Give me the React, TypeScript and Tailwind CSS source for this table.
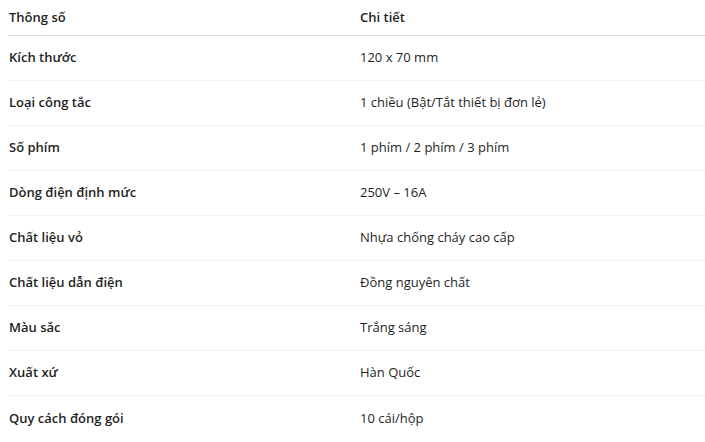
import React from 'react';

const rows: [string, string][] = [
  ['Kích thước', '120 x 70 mm'],
  ['Loại công tắc', '1 chiều (Bật/Tắt thiết bị đơn lẻ)'],
  ['Số phím', '1 phím / 2 phím / 3 phím'],
  ['Dòng điện định mức', '250V – 16A'],
  ['Chất liệu vỏ', 'Nhựa chống cháy cao cấp'],
  ['Chất liệu dẫn điện', 'Đồng nguyên chất'],
  ['Màu sắc', 'Trắng sáng'],
  ['Xuất xứ', 'Hàn Quốc'],
  ['Quy cách đóng gói', '10 cái/hộp'],
];

export default function App() {
  return (
    <div className="bg-white w-[705px] h-[442px] overflow-hidden pl-2 font-['Open_Sans',sans-serif] text-[13px] text-[#1f1f1f]">
      <table className="w-full border-collapse">
        <thead>
          <tr className="h-[35px] border-b-[1.5px] border-[#dcdcdc]">
            <th className="w-[352px] text-left font-semibold pl-px">Thông số</th>
            <th className="text-left font-semibold">Chi tiết</th>
          </tr>
        </thead>
        <tbody>
          {rows.map(([k, v]) => (
            <tr key={k} className="h-[45px] border-b border-[#f3f3f3] last:border-b-0">
              <td className="font-semibold pl-px pt-px">{k}</td>
              <td className="pt-px">{v}</td>
            </tr>
          ))}
        </tbody>
      </table>
    </div>
  );
}
